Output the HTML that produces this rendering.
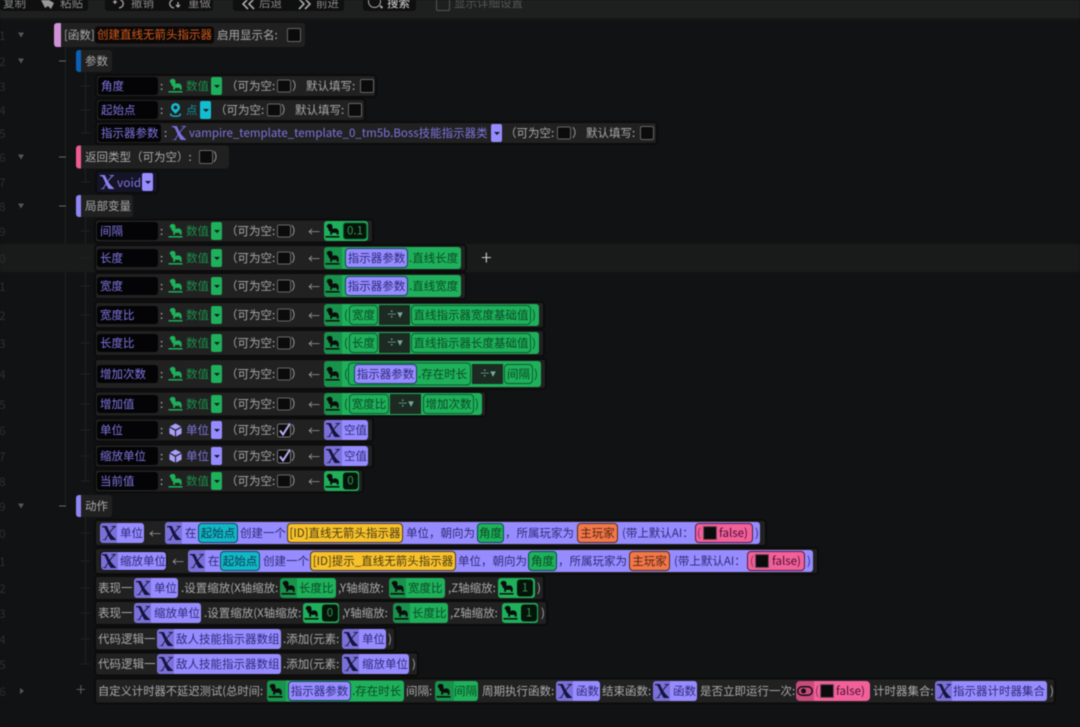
<!DOCTYPE html>
<html><head><meta charset="utf-8"><style>
html,body{margin:0;padding:0;background:#111213}
#p{position:relative;width:1080px;height:727px;overflow:hidden;background:#111213;font:11.5px/1.2 "Noto Sans CJK SC","Liberation Sans",sans-serif;color:#aaa;filter:blur(.4px)}
.a{position:absolute}
.r{position:absolute;left:0;width:1080px;height:0}
.r>*{position:absolute;top:0;transform:translateY(-50%);white-space:nowrap;box-sizing:border-box}
.r>span{margin-top:1px}
.b{display:flex;align-items:center;justify-content:center;padding-top:1px}
.c{background:#212121;outline:2px solid #0c0c0c;outline-offset:-1px;border-radius:3px}
.n{background:#040406;border-radius:3px;color:#7f75e0;padding-left:3px;height:18px;line-height:19px}
.g{background:#1eb05a;border-radius:3px;color:#0b4a26}
.pu{background:#978cff;border-radius:3px;color:#2d2a78}
.o{border-radius:4px;display:flex;align-items:center;justify-content:center;padding-top:1px;color:#0b4a26;background:#1eb05a;border:1px solid #0d5a33;height:20px}
.v{background:#978cff;color:#2d2a78;border:1px solid #1c3f63;border-radius:4px;height:20px;display:flex;align-items:center;justify-content:center;padding-top:1px}
.op{background:#1c2a22;color:#7a9;height:20px;display:flex;align-items:center;justify-content:center;font-size:11px}
.k{width:14px;height:13px;background:#0b0b0b;border:1.500px solid #666;border-radius:2px}
.dd{height:18px;width:11px;border-radius:2px}
.dd::after{content:"";position:absolute;left:2.500px;top:8px;border:3px solid transparent;border-top:3px solid #101820;border-bottom:0}
svg.i{width:15px;height:15px;fill:currentColor}
.x{width:14px;height:16px;fill:#14143c}
.gt{color:#1a8f4a}.pt{color:#7f75e0}.tt{color:#0f8f9a}
.ln{color:#2e2e2e;font-size:12px}
.tri{width:0;height:0;border-left:3.500px solid transparent;border-right:3.500px solid transparent;border-top:5px solid #555}
.dash{width:7px;height:1px;background:#6a6a6a}
.arrow{color:#999;font-size:12px}
.lb{color:#0c0c0c}
</style></head><body><div id="p">
<svg width="0" height="0" style="position:absolute"><defs>
<symbol id="ix" viewBox="0 0 14 16"><path d="M0 1h4.800c2 4 3.800 9 9.200 13.200V15H8.800C6 11.500 4.500 6 2.200 2.400L0 2.200z"/><path d="M13 1C9 4 5.500 10 2.500 14.500H.5v.5h4v-.5H3.600C6 10.500 10 4.500 13.600 1.600z"/><path d="M9.500 1h4.500v.8H9.500z"/></symbol>
<symbol id="in" viewBox="0 0 16 16"><path d="M1.800 3.500a3.200 3.200 0 0 1 6.200-1V6c2-1.500 6-1 6.500 2 .3 1.500.2 2.500 0 4h-2v-2h-5v2h-2V8.500c-1.500-.5-2-1.500-2-3z"/><path d="M.5 13.400h15V15H.5z"/></symbol>
<symbol id="ic" viewBox="0 0 16 16"><path d="M8 1l6 3.200-6 3.200-6-3.200zM1.500 5.400l5.900 3.200V15l-5.900-3.200zM14.500 5.400L8.600 8.600V15l5.900-3.200z"/></symbol>
<symbol id="ip" viewBox="0 0 16 16"><path fill-rule="evenodd" d="M8 .5a4.800 4.800 0 0 1 4.800 4.800c0 2.600-3.200 5-4.800 6.800-1.600-1.800-4.800-4.200-4.800-6.800A4.800 4.800 0 0 1 8 .5zm0 2.800a2 2 0 1 0 0 4 2 2 0 0 0 0-4z"/><path d="M3 11.500c-2 1.500-1 3.800 5 3.800s7-2.300 5-3.800l-1 .8c1 .8 0 1.700-4 1.700s-5-.9-4-1.700z"/></symbol>
<symbol id="ie" viewBox="0 0 16 12"><path fill-rule="evenodd" d="M5 1h6a5 5 0 0 1 0 10H5A5 5 0 0 1 5 1zm0 1.500a3.500 3.500 0 0 0 0 7h6a3.500 3.500 0 0 0 0-7z"/><circle cx="6.500" cy="6" r="2.500"/></symbol>
</defs></svg>

<!-- toolbar -->
<div class="a" style="left:0;top:0;width:1080px;height:18px;background:#1e1f1f"></div>
<div class="a" style="left:0;top:18px;width:1080px;height:3px;background:#141515"></div>
<div class="a" style="left:0;top:-2px;width:88px;height:13px;background:#0f0f0f;border-radius:3px"></div>
<div class="a" style="left:105px;top:-2px;width:108px;height:13px;background:#0f0f0f;border-radius:3px"></div>
<div class="a" style="left:233px;top:-2px;width:111px;height:13px;background:#0f0f0f;border-radius:3px"></div>
<div class="a" style="left:363px;top:-2px;width:53px;height:13px;background:#0f0f0f;border-radius:3px"></div>
<div class="a" style="left:436px;top:-3px;width:12px;height:12px;border:1.500px solid #555;border-radius:2px"></div>
<div class="a" style="left:3px;top:-3px;color:#8a8a8a">复制</div>
<div class="a" style="left:60px;top:-3px;color:#8a8a8a">粘贴</div>
<svg class="a" style="left:40px;top:0;width:16px;height:10px" viewBox="0 0 16 10"><path d="M1 0h8l5 3-3 6-3-3-3 2z" fill="#999"/></svg>
<svg class="a" style="left:111px;top:0;width:16px;height:10px" viewBox="0 0 16 10" fill="none" stroke="#aaa" stroke-width="1.300"><path d="M9 0c4 0 5 7-1 8"/><path d="M2 2h4M4 0v4"/></svg>
<div class="a" style="left:131px;top:-3px;color:#8a8a8a">撤销</div>
<svg class="a" style="left:168px;top:0;width:16px;height:10px" viewBox="0 0 16 10" fill="none" stroke="#aaa" stroke-width="1.300"><path d="M5 0C1 0 0 7 6 8"/><path d="M10 2v5M8 5l2 2 2-2"/></svg>
<div class="a" style="left:188px;top:-3px;color:#8a8a8a">重做</div>
<svg class="a" style="left:241px;top:0;width:15px;height:10px" viewBox="0 0 15 10" fill="none" stroke="#aaa" stroke-width="1.600"><path d="M7 -1L2 4l5 5M13 -1L8 4l5 5"/></svg>
<div class="a" style="left:259px;top:-3px;color:#8a8a8a">后退</div>
<svg class="a" style="left:297px;top:0;width:15px;height:10px" viewBox="0 0 15 10" fill="none" stroke="#aaa" stroke-width="1.600"><path d="M8 -1l5 5-5 5M2 -1l5 5-5 5"/></svg>
<div class="a" style="left:316px;top:-3px;color:#8a8a8a">前进</div>
<div class="a" style="left:368px;top:-5px;width:11px;height:11px;border:1.500px solid #aaa;border-radius:50%"></div>
<div class="a" style="left:380px;top:6px;width:3px;height:1.500px;background:#aaa;transform:rotate(45deg)"></div>
<div class="a" style="left:387px;top:-3px;color:#ddd">搜索</div>
<div class="a" style="left:454px;top:-3px;color:#555">显示详细设置</div>

<!-- tree lines -->
<div class="a" style="left:65px;top:47px;width:1px;height:460px;background:#202020"></div>
<div class="a" style="left:85px;top:72px;width:1px;height:61px;background:#222"></div>
<div class="a" style="left:85px;top:168px;width:1px;height:14px;background:#222"></div>
<div class="a" style="left:85px;top:217px;width:1px;height:264px;background:#222"></div>
<div class="a" style="left:85px;top:517px;width:1px;height:147px;background:#222"></div>

<!-- hover band -->
<div class="a" style="left:0;top:244px;width:1080px;height:28px;background:#191a1a"></div>

<!-- row 1 -->
<div class="r" style="top:35px"><span class="ln" style="left:-1px">1</span><i class="tri" style="left:18px"></i>
<div class="b" style="left:54px;width:251px;height:24px;background:#202020;border-radius:3px"></div><div style="left:54px;width:7px;height:24px;background:#cf92d6;border-radius:3px 0 0 3px"></div>
<span style="left:64px">[函数]</span><div class="b" style="left:95px;width:119px;height:17px;background:#0a0808;border-radius:3px;color:#d5591a">创建直线无箭头指示器</div><span style="left:217px">启用显示名:</span><i class="k" style="left:287px;height:14px"></i></div>

<!-- 参数 -->
<div class="r" style="top:61px"><span class="ln" style="left:-1px">2</span><i class="tri" style="left:18px"></i><i class="dash" style="left:59px"></i>
<div style="left:76px;width:36px;height:22px;background:#202020;border-radius:3px"></div><div style="left:76px;width:5px;height:22px;background:#0b5fb5;border-radius:3px 0 0 3px"></div><span style="left:85px">参数</span></div>

<div class="r" style="top:86px"><span class="ln" style="left:-1px">3</span><i class="dash" style="left:81px;background:#222;width:9px"></i>
<div class="c" style="left:96px;width:280px;height:22px"></div><div class="n" style="left:98px;width:60px">角度</div><span style="left:160px">:</span><svg class="i gt" style="left:168px;color:#1eb05a"><use href="#in"/></svg><span class="gt" style="left:186px">数值</span><i class="dd g" style="left:211px"></i><span style="left:226px">（可为空:</span><i class="k" style="left:277px"></i><span style="left:292px">）</span><span style="left:306px">默认填写:</span><i class="k" style="left:360px;height:14px"></i></div>

<div class="r" style="top:110px"><span class="ln" style="left:-1px">4</span><i class="dash" style="left:81px;background:#222;width:9px"></i>
<div class="c" style="left:96px;width:269px;height:22px"></div><div class="n" style="left:98px;width:60px">起始点</div><span style="left:160px">:</span><svg class="i" style="left:168px;color:#14bcd0"><use href="#ip"/></svg><span class="tt" style="left:186px">点</span><i class="dd" style="left:200px;background:#14bcd0"></i><span style="left:215px">（可为空:</span><i class="k" style="left:267px"></i><span style="left:281px">）</span><span style="left:295px">默认填写:</span><i class="k" style="left:348px;height:14px"></i></div>

<div class="r" style="top:133px"><span class="ln" style="left:-1px">5</span><i class="dash" style="left:81px;background:#222;width:9px"></i>
<div class="c" style="left:96px;width:561px;height:22px"></div><div class="n" style="left:98px;width:63px">指示器参数</div><span style="left:164px">:</span><svg class="x" style="left:172px;fill:#7a70e0"><use href="#ix"/></svg><span class="pt" style="left:189px;font-size:11.500px">vampire_template_template_0_tm5b.Boss技能指示器类</span><i class="dd pu" style="left:491px"></i><span style="left:505px">（可为空:</span><i class="k" style="left:557px"></i><span style="left:572px">）</span><span style="left:586px">默认填写:</span><i class="k" style="left:640px;height:14px"></i></div>

<div class="r" style="top:157px"><span class="ln" style="left:-1px">6</span><i class="tri" style="left:18px"></i><i class="dash" style="left:59px"></i>
<div style="left:76px;width:153px;height:23px;background:#202020;border-radius:3px"></div><div style="left:76px;width:5px;height:23px;background:#ef5c92;border-radius:3px 0 0 3px"></div><span style="left:85px">返回类型（可为空）:</span><i class="k" style="left:199px;height:14px"></i><span style="left:213px">）</span></div>

<div class="r" style="top:182px"><span class="ln" style="left:-1px">7</span><i class="dash" style="left:81px;background:#222;width:9px"></i>
<div class="c" style="left:96px;width:62px;height:22px;background:#141426"></div><svg class="x" style="left:100px;fill:#8a80f0"><use href="#ix"/></svg><span class="pt" style="left:117px;font-size:12px">void</span><i class="dd pu" style="left:142px"></i></div>

<div class="r" style="top:206px"><span class="ln" style="left:-1px">8</span><i class="tri" style="left:18px"></i><i class="dash" style="left:59px"></i>
<div style="left:76px;width:57px;height:22px;background:#202020;border-radius:3px"></div><div style="left:76px;width:5px;height:22px;background:#8f86f5;border-radius:3px 0 0 3px"></div><span style="left:85px">局部变量</span></div>

<!-- var rows -->
<div class="r" style="top:231px"><span class="ln" style="left:-1px">9</span><i class="dash" style="left:81px;background:#222;width:9px"></i>
<div class="c" style="left:95px;width:278px;height:23px"></div><div class="n" style="left:97px;width:61px">间隔</div><span style="left:160px">:</span><svg class="i" style="left:168px;color:#1eb05a"><use href="#in"/></svg><span class="gt" style="left:186px">数值</span><i class="dd g" style="left:211px"></i><span style="left:226px">（可为空:</span><i class="k" style="left:277px"></i><span style="left:291px">）</span><span class="arrow" style="left:308px">←</span>
<div class="g" style="left:324px;width:44px;height:20px"></div><svg class="i lb" style="left:325px"><use href="#in"/></svg><div class="b" style="left:343px;width:24px;height:17px;background:#04140a;border-radius:3px;color:#3d8f4d;border:1px solid #0d5a33">0.1</div></div>

<div class="r" style="top:258px"><span class="ln" style="left:-1px">0</span><i class="dash" style="left:81px;background:#222;width:9px"></i>
<div class="c" style="left:95px;width:371px;height:26px"></div><div class="n" style="left:97px;width:61px">长度</div><span style="left:160px">:</span><svg class="i" style="left:168px;color:#1eb05a"><use href="#in"/></svg><span class="gt" style="left:186px">数值</span><i class="dd g" style="left:211px"></i><span style="left:226px">（可为空:</span><i class="k" style="left:277px"></i><span style="left:291px">）</span><span class="arrow" style="left:308px">←</span>
<div class="g" style="left:324px;width:137px;height:22px;background:linear-gradient(90deg,#17934b 0 18px,#1eb05a 18px)"></div><svg class="i lb" style="left:325px"><use href="#in"/></svg><div class="v" style="left:345px;width:63px">指示器参数</div><span style="left:409px;color:#0b4a26">.直线长度</span>
<span style="left:481px;color:#ddd;font-size:20px;font-weight:300;margin-top:-1px">+</span></div>

<div class="r" style="top:286px"><span class="ln" style="left:-1px">1</span><i class="dash" style="left:81px;background:#222;width:9px"></i>
<div class="c" style="left:95px;width:371px;height:26px"></div><div class="n" style="left:97px;width:61px">宽度</div><span style="left:160px">:</span><svg class="i" style="left:168px;color:#1eb05a"><use href="#in"/></svg><span class="gt" style="left:186px">数值</span><i class="dd g" style="left:211px"></i><span style="left:226px">（可为空:</span><i class="k" style="left:277px"></i><span style="left:291px">）</span><span class="arrow" style="left:308px">←</span>
<div class="g" style="left:324px;width:137px;height:22px;background:linear-gradient(90deg,#17934b 0 18px,#1eb05a 18px)"></div><svg class="i lb" style="left:325px"><use href="#in"/></svg><div class="v" style="left:345px;width:63px">指示器参数</div><span style="left:409px;color:#0b4a26">.直线宽度</span></div>

<div class="r" style="top:315px"><span class="ln" style="left:-1px">2</span><i class="dash" style="left:81px;background:#222;width:9px"></i>
<div class="c" style="left:95px;width:449px;height:26px"></div><div class="n" style="left:97px;width:61px">宽度比</div><span style="left:160px">:</span><svg class="i" style="left:168px;color:#1eb05a"><use href="#in"/></svg><span class="gt" style="left:186px">数值</span><i class="dd g" style="left:211px"></i><span style="left:226px">（可为空:</span><i class="k" style="left:277px"></i><span style="left:291px">）</span><span class="arrow" style="left:308px">←</span>
<div class="g" style="left:324px;width:215px;height:22px;background:linear-gradient(90deg,#17934b 0 18px,#1eb05a 18px)"></div><svg class="i lb" style="left:325px"><use href="#in"/></svg><span style="left:344px;color:#0b4a26">(</span><div class="o" style="left:349px;width:29px">宽度</div><div class="op" style="left:379px;width:31px">÷▾</div><div class="o" style="left:411px;width:120px">直线指示器宽度基础值</div><span style="left:532px;color:#0b4a26">)</span></div>

<div class="r" style="top:343px"><span class="ln" style="left:-1px">3</span><i class="dash" style="left:81px;background:#222;width:9px"></i>
<div class="c" style="left:95px;width:449px;height:26px"></div><div class="n" style="left:97px;width:61px">长度比</div><span style="left:160px">:</span><svg class="i" style="left:168px;color:#1eb05a"><use href="#in"/></svg><span class="gt" style="left:186px">数值</span><i class="dd g" style="left:211px"></i><span style="left:226px">（可为空:</span><i class="k" style="left:277px"></i><span style="left:291px">）</span><span class="arrow" style="left:308px">←</span>
<div class="g" style="left:324px;width:215px;height:22px;background:linear-gradient(90deg,#17934b 0 18px,#1eb05a 18px)"></div><svg class="i lb" style="left:325px"><use href="#in"/></svg><span style="left:344px;color:#0b4a26">(</span><div class="o" style="left:349px;width:29px">长度</div><div class="op" style="left:379px;width:31px">÷▾</div><div class="o" style="left:411px;width:120px">直线指示器长度基础值</div><span style="left:532px;color:#0b4a26">)</span></div>

<div class="r" style="top:374px"><span class="ln" style="left:-1px">4</span><i class="dash" style="left:81px;background:#222;width:9px"></i>
<div class="c" style="left:95px;width:451px;height:30px"></div><div class="n" style="left:97px;width:61px">增加次数</div><span style="left:160px">:</span><svg class="i" style="left:168px;color:#1eb05a"><use href="#in"/></svg><span class="gt" style="left:186px">数值</span><i class="dd g" style="left:211px"></i><span style="left:226px">（可为空:</span><i class="k" style="left:277px"></i><span style="left:291px">）</span><span class="arrow" style="left:308px">←</span>
<div class="g" style="left:324px;width:217px;height:26px;background:linear-gradient(90deg,#17934b 0 18px,#1eb05a 18px)"></div><svg class="i lb" style="left:325px"><use href="#in"/></svg><span style="left:344px;color:#0b4a26">(</span><div class="o" style="left:348px;width:123px;height:23px"></div><div class="v" style="left:354px;width:63px">指示器参数</div><span style="left:418px;color:#0b4a26">.存在时长</span><div class="op" style="left:472px;width:31px">÷▾</div><div class="o" style="left:504px;width:29px">间隔</div><span style="left:534px;color:#0b4a26">)</span></div>

<div class="r" style="top:404px"><span class="ln" style="left:-1px">5</span><i class="dash" style="left:81px;background:#222;width:9px"></i>
<div class="c" style="left:95px;width:391px;height:25px"></div><div class="n" style="left:97px;width:61px">增加值</div><span style="left:160px">:</span><svg class="i" style="left:168px;color:#1eb05a"><use href="#in"/></svg><span class="gt" style="left:186px">数值</span><i class="dd g" style="left:211px"></i><span style="left:226px">（可为空:</span><i class="k" style="left:277px"></i><span style="left:291px">）</span><span class="arrow" style="left:308px">←</span>
<div class="g" style="left:324px;width:158px;height:22px;background:linear-gradient(90deg,#17934b 0 18px,#1eb05a 18px)"></div><svg class="i lb" style="left:325px"><use href="#in"/></svg><span style="left:344px;color:#0b4a26">(</span><div class="o" style="left:349px;width:40px">宽度比</div><div class="op" style="left:390px;width:31px">÷▾</div><div class="o" style="left:423px;width:51px">增加次数</div><span style="left:475px;color:#0b4a26">)</span></div>

<div class="r" style="top:430px"><span class="ln" style="left:-1px">6</span><i class="dash" style="left:81px;background:#222;width:9px"></i>
<div class="c" style="left:95px;width:278px;height:23px"></div><div class="n" style="left:97px;width:61px">单位</div><span style="left:160px">:</span><svg class="i" style="left:168px;color:#a79ff8"><use href="#ic"/></svg><span class="pt" style="left:186px">单位</span><i class="dd pu" style="left:211px"></i><span style="left:226px">（可为空:</span><svg class="a" style="left:277px;width:15px;height:15px" viewBox="0 0 15 15"><rect x=".5" y="1.500" width="13" height="13" rx="2" fill="#0b0b0b" stroke="#777"/><path d="M3 8l3 4 7-11" fill="none" stroke="#b5b0f5" stroke-width="2"/></svg><span style="left:291px">）</span><span class="arrow" style="left:308px">←</span>
<div class="pu" style="left:324px;width:44px;height:20px;background:linear-gradient(90deg,#7a70d8 0 18px,#978cff 18px)"></div><svg class="x" style="left:326px"><use href="#ix"/></svg><span style="left:344px;color:#2d2a78">空值</span></div>

<div class="r" style="top:456px"><span class="ln" style="left:-1px">7</span><i class="dash" style="left:81px;background:#222;width:9px"></i>
<div class="c" style="left:95px;width:278px;height:23px"></div><div class="n" style="left:97px;width:61px">缩放单位</div><span style="left:160px">:</span><svg class="i" style="left:168px;color:#a79ff8"><use href="#ic"/></svg><span class="pt" style="left:186px">单位</span><i class="dd pu" style="left:211px"></i><span style="left:226px">（可为空:</span><svg class="a" style="left:277px;width:15px;height:15px" viewBox="0 0 15 15"><rect x=".5" y="1.500" width="13" height="13" rx="2" fill="#0b0b0b" stroke="#777"/><path d="M3 8l3 4 7-11" fill="none" stroke="#b5b0f5" stroke-width="2"/></svg><span style="left:291px">）</span><span class="arrow" style="left:308px">←</span>
<div class="pu" style="left:324px;width:44px;height:20px;background:linear-gradient(90deg,#7a70d8 0 18px,#978cff 18px)"></div><svg class="x" style="left:326px"><use href="#ix"/></svg><span style="left:344px;color:#2d2a78">空值</span></div>

<div class="r" style="top:481px"><span class="ln" style="left:-1px">8</span><i class="dash" style="left:81px;background:#222;width:9px"></i>
<div class="c" style="left:95px;width:268px;height:23px"></div><div class="n" style="left:97px;width:61px">当前值</div><span style="left:160px">:</span><svg class="i" style="left:168px;color:#1eb05a"><use href="#in"/></svg><span class="gt" style="left:186px">数值</span><i class="dd g" style="left:211px"></i><span style="left:226px">（可为空:</span><i class="k" style="left:277px"></i><span style="left:291px">）</span><span class="arrow" style="left:308px">←</span>
<div class="g" style="left:324px;width:35px;height:20px"></div><svg class="i lb" style="left:325px"><use href="#in"/></svg><div class="b" style="left:343px;width:15px;height:17px;background:#04140a;border-radius:3px;color:#3d8f4d">0</div></div>

<div class="r" style="top:506px"><span class="ln" style="left:-1px">9</span><i class="tri" style="left:18px"></i><i class="dash" style="left:59px"></i>
<div style="left:76px;width:36px;height:22px;background:#202020;border-radius:3px"></div><div style="left:76px;width:5px;height:22px;background:#8f86f5;border-radius:3px 0 0 3px"></div><span style="left:85px">动作</span></div>

<!-- actions -->
<div class="r" style="top:533px;color:#2d2a78"><span class="ln" style="left:-1px">0</span><i class="dash" style="left:81px;background:#222;width:9px"></i>
<div class="c" style="left:95px;width:671px;height:26px"></div>
<div class="pu" style="left:100px;width:44px;height:20px;background:linear-gradient(90deg,#7a70d8 0 17px,#978cff 17px)"></div><svg class="x" style="left:102px"><use href="#ix"/></svg><span style="left:120px">单位</span><span class="arrow" style="left:149px">←</span>
<div class="pu" style="left:165px;width:595px;height:22px;background:linear-gradient(90deg,#7a70d8 0 17px,#978cff 17px)"></div><svg class="x" style="left:167px"><use href="#ix"/></svg><span style="left:185px">在</span>
<div class="b" style="left:198px;width:40px;height:20px;background:#12b6c4;border:1px solid #0a4a60;border-radius:4px;color:#0a3a50">起始点</div><span style="left:240px">创建一个</span>
<div class="b" style="left:287px;width:116px;height:20px;background:#f6c12c;border:1px solid #4a3a10;border-radius:4px;color:#4a3a10">[ID]直线无箭头指示器</div><span style="left:406px">单位，朝向为</span>
<div class="o" style="left:477px;width:27px;border-color:#0c4a50">角度</div><span style="left:505px">，所属玩家为</span>
<div class="b" style="left:577px;width:41px;height:20px;background:#f0784a;border:1px solid #5a2a14;border-radius:4px;color:#5a2410">主玩家</div><span style="left:622px">(带上默认AI：</span>
<div class="b" style="left:695px;width:58px;height:20px;background:#f2609a;border:1px solid #5a1a3a;border-radius:4px"></div><span style="left:697px;color:#7a2a50">(</span><div style="left:703px;width:14px;height:14px;background:#0b0b0b;border:1px solid #7a4a60"></div><span style="left:719px;color:#4a1030">false)</span><span style="left:755px">)</span></div>

<div class="r" style="top:561px;color:#2d2a78"><span class="ln" style="left:-1px">1</span><i class="dash" style="left:81px;background:#222;width:9px"></i>
<div class="c" style="left:95px;width:723px;height:26px"></div>
<div class="v" style="left:100px;width:67px;background:linear-gradient(90deg,#7a70d8 0 17px,#978cff 17px);height:20px;border-color:#0d0d0d;justify-content:flex-start;padding-left:19px">缩放单位</div><svg class="x" style="left:102px"><use href="#ix"/></svg><span class="arrow" style="left:172px">←</span>
<div class="pu" style="left:188px;width:625px;height:22px;background:linear-gradient(90deg,#7a70d8 0 17px,#978cff 17px)"></div><svg class="x" style="left:190px"><use href="#ix"/></svg><span style="left:208px">在</span>
<div class="b" style="left:220px;width:40px;height:20px;background:#12b6c4;border:1px solid #0a4a60;border-radius:4px;color:#0a3a50">起始点</div><span style="left:263px">创建一个</span>
<div class="b" style="left:310px;width:146px;height:20px;background:#f6c12c;border:1px solid #4a3a10;border-radius:4px;color:#4a3a10">[ID]提示_直线无箭头指示器</div><span style="left:458px">单位，朝向为</span>
<div class="o" style="left:528px;width:29px;border-color:#0c4a50">角度</div><span style="left:558px">，所属玩家为</span>
<div class="b" style="left:629px;width:41px;height:20px;background:#f0784a;border:1px solid #5a2a14;border-radius:4px;color:#5a2410">主玩家</div><span style="left:674px">(带上默认AI：</span>
<div class="b" style="left:747px;width:58px;height:20px;background:#f2609a;border:1px solid #5a1a3a;border-radius:4px"></div><span style="left:750px;color:#7a2a50">(</span><div style="left:755px;width:14px;height:14px;background:#0b0b0b;border:1px solid #7a4a60"></div><span style="left:772px;color:#4a1030">false)</span><span style="left:807px">)</span></div>

<div class="r" style="top:588px"><span class="ln" style="left:-1px">2</span><i class="dash" style="left:81px;background:#222;width:9px"></i>
<div class="c" style="left:95px;width:449px;height:24px"></div><span style="left:98px">表现一</span>
<div class="pu" style="left:134px;width:44px;height:20px;background:linear-gradient(90deg,#7a70d8 0 17px,#978cff 17px)"></div><svg class="x" style="left:136px"><use href="#ix"/></svg><span style="left:154px;color:#2d2a78">单位</span>
<span style="left:181px">.设置缩放(X轴缩放:</span><div class="g" style="left:280px;width:56px;height:20px;background:linear-gradient(90deg,#17934b 0 17px,#1eb05a 17px)"></div><svg class="i lb" style="left:281px"><use href="#in"/></svg><span style="left:299px;color:#0b4a26">长度比</span>
<span style="left:338px">,Y轴缩放:</span><div class="g" style="left:389px;width:56px;height:20px;background:linear-gradient(90deg,#17934b 0 17px,#1eb05a 17px)"></div><svg class="i lb" style="left:390px"><use href="#in"/></svg><span style="left:408px;color:#0b4a26">宽度比</span>
<span style="left:448px">,Z轴缩放:</span><div class="g" style="left:498px;width:37px;height:20px"></div><svg class="i lb" style="left:499px"><use href="#in"/></svg><div class="b" style="left:517px;width:16px;height:17px;background:#04140a;border-radius:3px;color:#3d8f4d">1</div><span style="left:537px">)</span></div>

<div class="r" style="top:613px"><span class="ln" style="left:-1px">3</span><i class="dash" style="left:81px;background:#222;width:9px"></i>
<div class="c" style="left:95px;width:452px;height:24px"></div><span style="left:98px">表现一</span>
<div class="pu" style="left:134px;width:67px;height:20px;background:linear-gradient(90deg,#7a70d8 0 17px,#978cff 17px)"></div><svg class="x" style="left:136px"><use href="#ix"/></svg><span style="left:154px;color:#2d2a78">缩放单位</span>
<span style="left:204px">.设置缩放(X轴缩放:</span><div class="g" style="left:303px;width:36px;height:20px"></div><svg class="i lb" style="left:304px"><use href="#in"/></svg><div class="b" style="left:322px;width:16px;height:17px;background:#04140a;border-radius:3px;color:#3d8f4d">0</div>
<span style="left:342px">,Y轴缩放:</span><div class="g" style="left:393px;width:55px;height:20px;background:linear-gradient(90deg,#17934b 0 17px,#1eb05a 17px)"></div><svg class="i lb" style="left:394px"><use href="#in"/></svg><span style="left:412px;color:#0b4a26">长度比</span>
<span style="left:450px">,Z轴缩放:</span><div class="g" style="left:502px;width:36px;height:20px"></div><svg class="i lb" style="left:503px"><use href="#in"/></svg><div class="b" style="left:521px;width:16px;height:17px;background:#04140a;border-radius:3px;color:#3d8f4d">1</div><span style="left:541px">)</span></div>

<div class="r" style="top:639px"><span class="ln" style="left:-1px">4</span><i class="dash" style="left:81px;background:#222;width:9px"></i>
<div class="c" style="left:95px;width:300px;height:23px"></div><span style="left:98px">代码逻辑一</span>
<div class="pu" style="left:157px;width:124px;height:20px;background:linear-gradient(90deg,#7a70d8 0 17px,#978cff 17px)"></div><svg class="x" style="left:159px"><use href="#ix"/></svg><span style="left:176px;color:#2d2a78">敌人技能指示器数组</span>
<span style="left:283px">.添加(元素:</span><div class="pu" style="left:342px;width:44px;height:20px;background:linear-gradient(90deg,#7a70d8 0 17px,#978cff 17px)"></div><svg class="x" style="left:344px"><use href="#ix"/></svg><span style="left:362px;color:#2d2a78">单位</span><span style="left:388px">)</span></div>

<div class="r" style="top:664px"><span class="ln" style="left:-1px">5</span><i class="dash" style="left:81px;background:#222;width:9px"></i>
<div class="c" style="left:95px;width:323px;height:23px"></div><span style="left:98px">代码逻辑一</span>
<div class="pu" style="left:157px;width:124px;height:20px;background:linear-gradient(90deg,#7a70d8 0 17px,#978cff 17px)"></div><svg class="x" style="left:159px"><use href="#ix"/></svg><span style="left:176px;color:#2d2a78">敌人技能指示器数组</span>
<span style="left:283px">.添加(元素:</span><div class="pu" style="left:342px;width:67px;height:20px;background:linear-gradient(90deg,#7a70d8 0 17px,#978cff 17px)"></div><svg class="x" style="left:344px"><use href="#ix"/></svg><span style="left:362px;color:#2d2a78">缩放单位</span><span style="left:412px">)</span></div>

<div class="r" style="top:691px"><span class="ln" style="left:-1px">6</span><i style="left:20px;width:0;height:0;border-top:3.500px solid transparent;border-bottom:3.500px solid transparent;border-left:4px solid #555"></i><span style="left:76px;color:#666;font-size:18px;font-weight:300;margin-top:-1px">+</span>
<div class="c" style="left:95px;width:960px;height:25px"></div><span style="left:98px;font-size:11.300px">自定义计时器不延迟测试(总时间:</span>
<div class="g" style="left:267px;width:137px;height:21px;background:linear-gradient(90deg,#17934b 0 19px,#1eb05a 19px)"></div><svg class="i lb" style="left:268px"><use href="#in"/></svg><div class="v" style="left:288px;width:63px">指示器参数</div><span style="left:352px;color:#0b4a26">.存在时长</span>
<span style="left:406px">间隔:</span><div class="g" style="left:435px;width:43px;height:20px;background:linear-gradient(90deg,#17934b 0 19px,#1eb05a 19px)"></div><svg class="i lb" style="left:436px"><use href="#in"/></svg><span style="left:454px;color:#0b4a26">间隔</span>
<span style="left:482px">周期执行函数:</span><div class="pu" style="left:556px;width:44px;height:20px;background:linear-gradient(90deg,#7a70d8 0 17px,#978cff 17px)"></div><svg class="x" style="left:558px"><use href="#ix"/></svg><span style="left:576px;color:#2d2a78">函数</span>
<span style="left:602px">结束函数:</span><div class="pu" style="left:653px;width:44px;height:20px;background:linear-gradient(90deg,#7a70d8 0 17px,#978cff 17px)"></div><svg class="x" style="left:655px"><use href="#ix"/></svg><span style="left:673px;color:#2d2a78">函数</span>
<span style="left:700px">是否立即运行一次:</span><div class="b" style="left:796px;width:74px;height:20px;background:linear-gradient(90deg,#c94a7c 0 18px,#f2609a 18px);border-radius:4px"></div><svg style="left:797px;width:16px;height:12px;fill:#111"><use href="#ie"/></svg><span style="left:815px;color:#7a2a50">(</span><div style="left:820px;width:14px;height:14px;background:#0b0b0b;border:1px solid #7a4a60"></div><span style="left:836px;color:#4a1030">false)</span>
<span style="left:873px">计时器集合:</span><div class="pu" style="left:935px;width:112px;height:20px;background:linear-gradient(90deg,#7a70d8 0 17px,#978cff 17px)"></div><svg class="x" style="left:937px"><use href="#ix"/></svg><span style="left:953px;color:#2d2a78">指示器计时器集合</span><span style="left:1050px">)</span></div>
</div></body></html>
